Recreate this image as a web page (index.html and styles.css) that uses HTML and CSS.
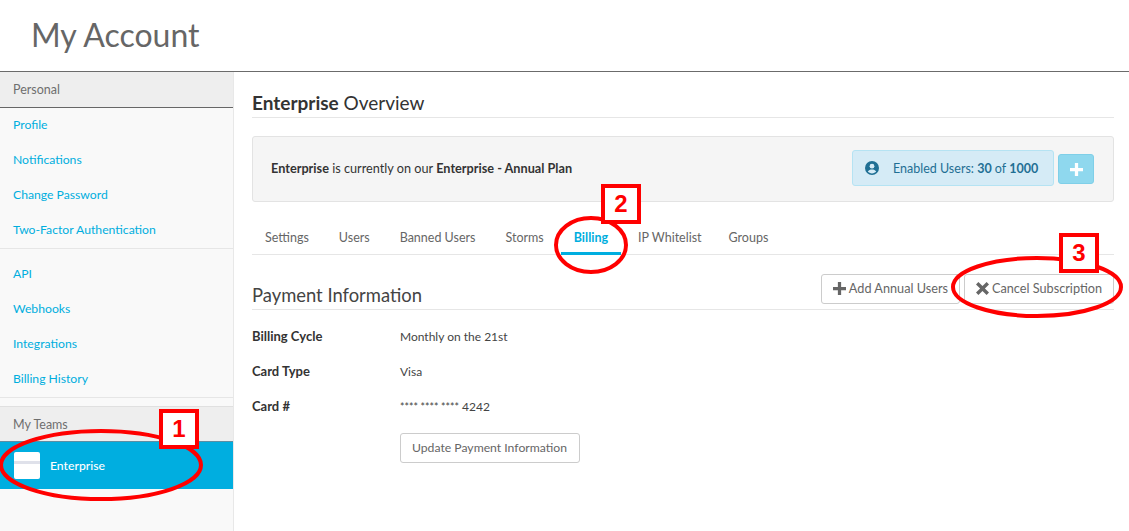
FILE: index.html
```html
<!DOCTYPE html>
<html lang="en">
<head>
    <meta charset="UTF-8">
    <title>My Account</title>
    <link rel="stylesheet" href="styles.css">
</head>
<body>
    <header class="page-header">
        <h1>My Account</h1>
    </header>
    <div class="layout">
        <nav class="sidebar">
            <div class="side-title side-title-first">Personal</div>
            <ul class="side-list">
                <li><a href="#">Profile</a></li>
                <li><a href="#">Notifications</a></li>
                <li><a href="#">Change Password</a></li>
                <li><a href="#">Two-Factor Authentication</a></li>
            </ul>
            <ul class="side-list">
                <li><a href="#">API</a></li>
                <li><a href="#">Webhooks</a></li>
                <li><a href="#">Integrations</a></li>
                <li><a href="#">Billing History</a></li>
            </ul>
            <div class="side-title">My Teams</div>
            <a class="team-row" href="#">
                <span class="team-logo"></span>
                <span>Enterprise</span>
            </a>
        </nav>
        <main class="content">
            <h2 class="section-title"><strong>Enterprise</strong> Overview</h2>
            <section class="plan-panel">
                <p><strong>Enterprise</strong> is currently on our <strong>Enterprise - Annual Plan</strong></p>
                <div class="plan-users">
                    <div class="users-badge">
                        <svg class="users-icon" viewBox="0 0 14 14" width="14" height="14">
                            <circle cx="7" cy="7" r="7" fill="#1f6f94"/>
                            <circle cx="7" cy="5.2" r="2.4" fill="#d5ebf6"/>
                            <path d="M2.8 10.6c.8-1.6 2.4-2.2 4.2-2.2s3.400.6 4.200 2.200c-1 1.100-2.500 1.800-4.200 1.800s-3.200-.7-4.200-1.800z" fill="#d5ebf6"/>
                        </svg>
                        <span>Enabled Users: <strong>30</strong> of <strong>1000</strong></span>
                    </div>
                    <button class="users-add" type="button">
                        <svg viewBox="0 0 12 12" width="13" height="13"><path d="M4.500 0h3v4.500H12v3H7.500V12h-3V7.500H0v-3h4.500z" fill="#fff"/></svg>
                    </button>
                </div>
            </section>
            <div class="tabs">
                <a href="#">Settings</a>
                <a href="#">Users</a>
                <a href="#">Banned Users</a>
                <a href="#">Storms</a>
                <a href="#" class="active">Billing</a>
                <a href="#" class="tab-tight">IP Whitelist</a>
                <a href="#">Groups</a>
            </div>
            <div class="payment-head">
                <h2>Payment Information</h2>
                <div class="payment-actions">
                    <button class="btn" type="button">
                        <svg viewBox="0 0 12 12" width="13" height="13"><path d="M4.500 0h3v4.500H12v3H7.500V12h-3V7.500H0v-3h4.500z" fill="#666"/></svg>
                        Add Annual Users
                    </button>
                    <button class="btn" type="button">
                        <svg viewBox="0 0 12 12" width="13" height="13"><path d="M2.200 0L6 3.800 9.800 0 12 2.200 8.200 6 12 9.800 9.800 12 6 8.200 2.200 12 0 9.800 3.800 6 0 2.200z" fill="#666"/></svg>
                        Cancel Subscription
                    </button>
                </div>
            </div>
            <dl class="details">
                <div><dt>Billing Cycle</dt><dd>Monthly on the 21st</dd></div>
                <div><dt>Card Type</dt><dd>Visa</dd></div>
                <div><dt>Card #</dt><dd><span class="stars">**** **** ****</span> 4242</dd></div>
            </dl>
            <button class="btn btn-update" type="button">Update Payment Information</button>
        </main>
    </div>

    <!-- Red annotations drawn on top of the screenshot -->
    <svg class="marks" width="1129" height="531" viewBox="0 0 1129 531">
        <ellipse cx="101" cy="465" rx="100" ry="34" />
        <ellipse cx="591" cy="245" rx="35" ry="27" />
        <ellipse cx="1037" cy="287" rx="84" ry="29" />
    </svg>
    <div class="callout callout-1">1</div>
    <div class="callout callout-2">2</div>
    <div class="callout callout-3">3</div>
</body>
</html>
```

FILE: styles.css
```css
/* Global Styles */
* {
    margin: 0;
    padding: 0;
    box-sizing: border-box;
}

html, body {
    height: 531px;
    overflow: hidden;
}

body {
    position: relative;
    font-family: 'Lato', 'Liberation Sans', sans-serif;
    font-size: 12.7px;
    color: #444;
    background-color: #fff;
}

a {
    text-decoration: none;
}

/* Header */
.page-header {
    height: 72px;
    padding: 14px 0 0 31px;
    border-bottom: 1px solid #6b6b6b;
}

.page-header h1 {
    font-size: 32px;
    line-height: 42px;
    font-weight: 400;
    color: #666;
}

.layout {
    display: flex;
    height: 459px;
}

/* Sidebar */
.sidebar {
    width: 234px;
    flex-shrink: 0;
    background-color: #f9f9f9;
    border-right: 1px solid #e8e8e8;
}

.side-title {
    height: 35px;
    padding: 9px 13px 0;
    font-size: 12.5px;
    line-height: 18px;
    color: #6e6e6e;
    background-color: #eee;
    border-top: 1px solid #e0e0e0;
}

.side-title-first {
    height: 36px;
    border-top: 0;
    border-bottom: 1px solid #666;
    padding-top: 9px;
}

.side-list {
    list-style: none;
    margin-bottom: 8px;
    font-size: 12.2px;
    border-bottom: 1px solid #e6e6e6;
}

.side-list li {
    height: 35px;
    padding: 8px 0 0 13px;
    line-height: 18px;
}

.side-list a {
    color: #00aede;
}

.team-row {
    display: flex;
    align-items: center;
    gap: 10px;
    height: 48px;
    padding-left: 14px;
    font-size: 12.2px;
    color: #fff;
    font-weight: 500;
    background-color: #00aee0;
    border-top: 1px solid #5d8ea3;
}

.team-logo {
    width: 26px;
    height: 27px;
    border-radius: 2px;
    background: linear-gradient(#fff 9px, #dfe1ea 9px, #dfe1ea 12px, #fff 12px);
}

/* Content */
.content {
    flex: 1;
    padding: 19px 15px 0 18px;
}

.section-title {
    height: 27px;
    font-size: 19px;
    line-height: 24px;
    font-weight: 400;
    color: #333;
    border-bottom: 1px solid #e6e6e6;
}

.plan-panel {
    display: flex;
    align-items: center;
    justify-content: space-between;
    height: 66px;
    margin-top: 18px;
    padding: 0 19px 2px 18px;
    color: #333;
    background-color: #f5f5f5;
    border: 1px solid #e3e3e3;
    border-radius: 3px;
}

.plan-users {
    display: flex;
    align-items: flex-start;
    gap: 4px;
}

.users-badge {
    display: flex;
    align-items: center;
    gap: 14px;
    height: 36px;
    width: 202px;
    padding: 0 0 0 12px;
    font-size: 12.5px;
    color: #1f6f94;
    background-color: #d5ebf6;
    border: 1px solid #b5e3f3;
    border-radius: 3px;
}

.users-icon {
    flex-shrink: 0;
}

.users-add {
    display: flex;
    align-items: center;
    justify-content: center;
    width: 36px;
    height: 30px;
    margin-top: 4px;
    background-color: #8fd8ee;
    border: 1px solid #7fcfe8;
    border-radius: 3px;
}

/* Tabs */
.tabs {
    display: flex;
    height: 35px;
    margin-top: 18px;
    border-bottom: 1px solid #e6e6e6;
}

.tabs a {
    height: 35px;
    padding: 9px 13px 0;
    margin-right: 4px;
    line-height: 18px;
    font-size: 12.5px;
    color: #666;
}

.tabs a.active {
    color: #00aede;
    font-weight: 700;
    border-bottom: 3px solid #00aee0;
}

.tabs a.tab-tight {
    margin-right: 1px;
}

/* Payment */
.payment-head {
    display: flex;
    align-items: flex-end;
    justify-content: space-between;
    height: 55px;
    border-bottom: 1px solid #e6e6e6;
}

.payment-head h2 {
    font-size: 18.400px;
    line-height: 24px;
    font-weight: 400;
    color: #444;
    padding-bottom: 2px;
}

.payment-actions {
    display: flex;
    gap: 4px;
    padding-bottom: 5px;
}

.btn {
    display: inline-flex;
    align-items: center;
    gap: 3px;
    height: 30px;
    padding: 0 11px 2px;
    font-family: inherit;
    font-size: 12.7px;
    color: #666;
    background-color: #fff;
    border: 1px solid #ccc;
    border-radius: 3px;
}

.details {
    margin-top: 9px;
}

.details div {
    display: flex;
    height: 35px;
    line-height: 35px;
}

.details dt {
    width: 148px;
    font-size: 13px;
    font-weight: 700;
    color: #333;
}

.details dd {
    font-size: 12px;
    color: #444;
}

.stars {
    font-size: 10.5px;
}

.btn-update {
    margin: 9px 0 0 148px;
    padding: 0 12px 2px 11px;
    font-size: 12.2px;
}

/* Annotations */
.marks {
    position: absolute;
    top: 0;
    left: 0;
    fill: none;
    stroke: #f00;
    stroke-width: 4;
}

.callout {
    position: absolute;
    width: 40px;
    height: 40px;
    font-family: 'Liberation Sans', sans-serif;
    font-size: 24px;
    font-weight: 700;
    line-height: 32px;
    text-align: center;
    color: #f00;
    background-color: #fff;
    border: 4px solid #f00;
}

.callout-1 {
    left: 159px;
    top: 409px;
}

.callout-2 {
    left: 601px;
    top: 184px;
}

.callout-3 {
    left: 1059px;
    top: 233px;
}
```
